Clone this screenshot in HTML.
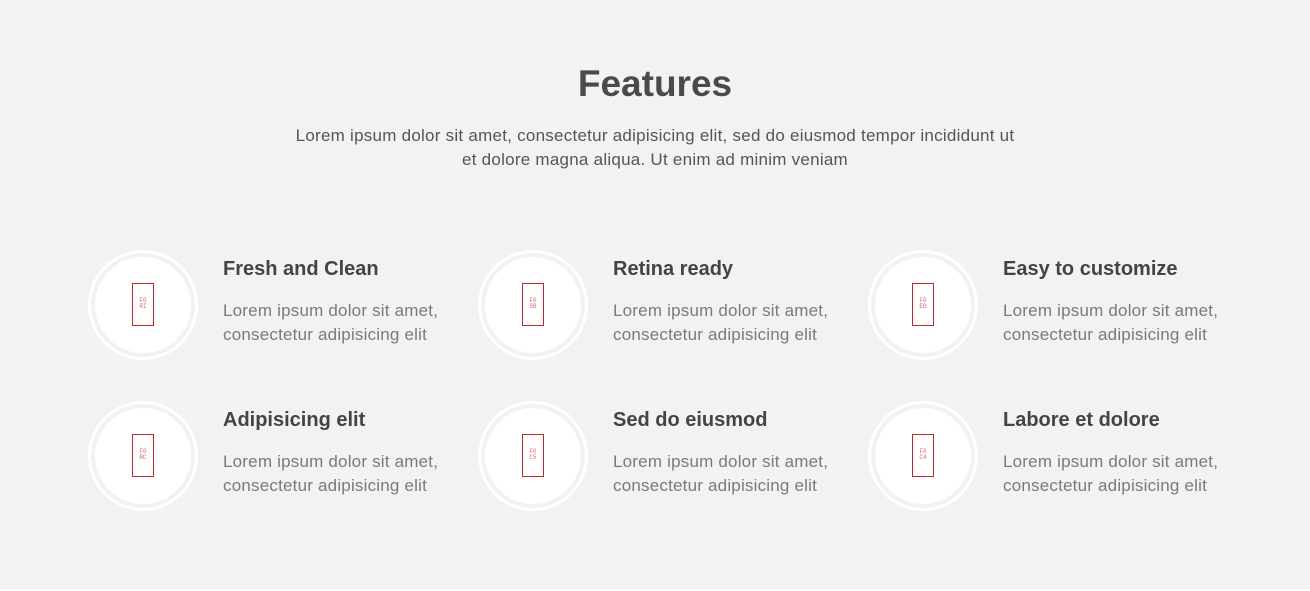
<!DOCTYPE html>
<html><head><meta charset="utf-8"><style>
body{margin:0;width:1310px;height:591px;background:#f2f2f2;font-family:"Liberation Sans",sans-serif;position:relative;overflow:hidden}
h1{position:absolute;top:60px;left:0;width:1310px;text-align:center;margin:0;font-size:37px;font-weight:600;color:#4a4a4a;line-height:48px}
.sub{position:absolute;top:124px;left:0;width:1310px;text-align:center;font-size:17px;letter-spacing:0.25px;line-height:24px;color:#555}
.f{position:absolute;width:400px;height:112px}
.c{position:absolute;left:0;top:0;width:104px;height:104px;border:3px solid #fff;border-radius:50%}
.c::after{content:"";position:absolute;left:4px;top:4px;width:96px;height:96px;background:#fff;border-radius:50%}
.b{position:absolute;left:44px;top:33px;width:20px;height:41px;border:1px solid #c0282d;z-index:2;font:6px "Liberation Mono",monospace;color:#d66;text-align:center;line-height:6px}
.b span{display:block;margin-top:14px}
h3{position:absolute;left:135px;top:4px;margin:0;font-size:20px;font-weight:600;color:#444;line-height:30px}
p{position:absolute;left:135px;top:49px;margin:0;font-size:17px;letter-spacing:0.2px;line-height:24px;color:#7a7a7a;white-space:nowrap}
.bot{position:absolute;left:0;bottom:0;width:1310px;height:2px;background:#fff}
</style></head><body>
<h1>Features</h1>
<div class="sub">Lorem ipsum dolor sit amet, consectetur adipisicing elit, sed do eiusmod tempor incididunt ut<br>et dolore magna aliqua. Ut enim ad minim veniam</div>

<div class="f" style="left:88px;top:250px"><div class="c"></div><div class="b"><span>F0<br>RI</span></div><h3>Fresh and Clean</h3><p>Lorem ipsum dolor sit amet,<br>consectetur adipisicing elit</p></div>
<div class="f" style="left:478px;top:250px"><div class="c"></div><div class="b"><span>F0<br>SB</span></div><h3>Retina ready</h3><p>Lorem ipsum dolor sit amet,<br>consectetur adipisicing elit</p></div>
<div class="f" style="left:868px;top:250px"><div class="c"></div><div class="b"><span>F0<br>ED</span></div><h3>Easy to customize</h3><p>Lorem ipsum dolor sit amet,<br>consectetur adipisicing elit</p></div>
<div class="f" style="left:88px;top:401px"><div class="c"></div><div class="b"><span>F0<br>BC</span></div><h3>Adipisicing elit</h3><p>Lorem ipsum dolor sit amet,<br>consectetur adipisicing elit</p></div>
<div class="f" style="left:478px;top:401px"><div class="c"></div><div class="b"><span>F0<br>C5</span></div><h3>Sed do eiusmod</h3><p>Lorem ipsum dolor sit amet,<br>consectetur adipisicing elit</p></div>
<div class="f" style="left:868px;top:401px"><div class="c"></div><div class="b"><span>F0<br>C4</span></div><h3>Labore et dolore</h3><p>Lorem ipsum dolor sit amet,<br>consectetur adipisicing elit</p></div>
<div class="bot"></div>
</body></html>
